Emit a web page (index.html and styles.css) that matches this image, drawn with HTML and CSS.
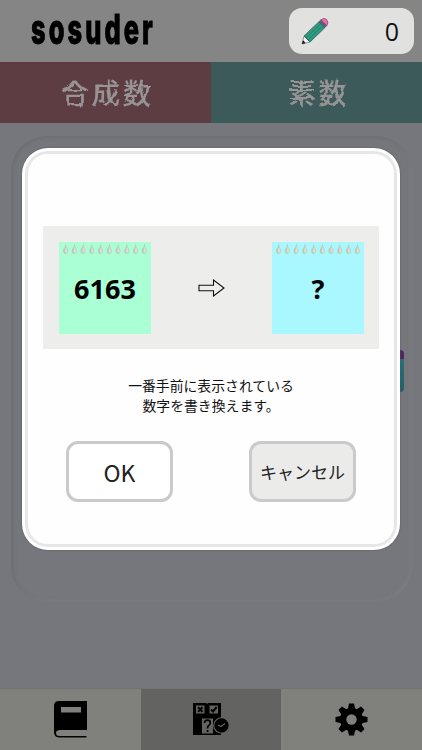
FILE: index.html
```html
<!DOCTYPE html>
<html lang="ja">
<head>
    <meta charset="UTF-8">
    <meta name="viewport" content="width=device-width, initial-scale=1.0">
    <title>sosuder</title>
    <link rel="stylesheet" href="styles.css">
</head>
<body>
    <!-- rough chalk edge for the tab labels -->
    <svg class="defs" width="0" height="0">
        <filter id="chalk">
            <feTurbulence type="fractalNoise" baseFrequency=".1" numOctaves="1" seed="4"/>
            <feDisplacementMap in="SourceGraphic" scale="4" xChannelSelector="R" yChannelSelector="G"/>
        </filter>
    </svg>
    <div class="app">
        <header class="header">
            <h1 class="logo">sosuder</h1>
            <div class="counter">
                <svg class="pencil" width="28" height="28" viewBox="0 0 28 28">
                    <path d="M1 27L3 19L9 25Z" fill="#f4f4f2" stroke="#555" stroke-width=".6"/>
                    <path d="M1 27L2 23.2L4.7 25.9Z" fill="#111"/>
                    <path d="M3 19L18 4.7L24 10.5L9 25Z" fill="#2f9c82" stroke="#28584e" stroke-width=".8"/>
                    <path d="M5 21L20 6.6M7 23L22 8.6" stroke="#257663" stroke-width=".8"/>
                    <path d="M18 4.7L20 2.8L25.8 8.6L24 10.5Z" fill="#5b5d91" stroke="#454763" stroke-width=".6"/>
                    <path d="M20 2.8Q23 .2 25.6 2.5Q28.2 5.4 25.8 8.6Z" fill="#ee7199" stroke="#74485a" stroke-width=".7"/>
                </svg>
                <span>0</span>
            </div>
        </header>

        <nav class="tabs">
            <div class="tab composite"><span>合成数</span></div>
            <div class="tab prime"><span>素数</span></div>
        </nav>

        <main class="board">
            <div class="panel"></div>
            <div class="hidden-card"></div>
        </main>

        <footer class="footer">
            <div class="menu">
                <svg width="33" height="37" viewBox="0 0 33 37">
                    <path fill="#000" fill-rule="evenodd" d="M5 0H33V29H5.5Q2 29.500 2 32Q2 35 5.500 35H32.500V36.500H5Q0 36 0 31V5Q0 0 5 0ZM7 6V11.500H27V6Z"/>
                </svg>
            </div>
            <div class="menu active">
                <svg width="36" height="33" viewBox="0 0 36 33">
                    <path d="M0 0H13L14 1L15 0H28V32H0Z" fill="#000"/>
                    <path d="M3 2.500H11.500V10.500H3ZM16.500 2.500H25V10.500H16.500ZM9 15.500H20V30.500H9Z" fill="#636361"/>
                    <path d="M5 4.300L9.500 8.800M9.500 4.300L5 8.800M18 6.500L20 8.500L23.700 4" fill="none" stroke="#000" stroke-width="2"/>
                    <path d="M11.500 20Q11.500 17.200 14.500 17.200Q17.300 17.200 17.300 19.700Q17.300 21.300 15.800 22.400Q14.500 23.300 14.500 25.500M14.500 27V29" fill="none" stroke="#000" stroke-width="1.700"/>
                    <circle cx="28.500" cy="22.500" r="8.300" fill="#636361"/>
                    <circle cx="28.500" cy="22.500" r="6.200" fill="#000"/>
                    <circle cx="28.500" cy="22.500" r="6.500" fill="none" stroke="#000" stroke-width="1.300"/>
                    <path d="M25 22L28 23.500L32 20.500" fill="none" stroke="#636361" stroke-width="1.200"/>
                </svg>
            </div>
            <div class="menu">
                <svg width="33" height="33" viewBox="-16.500 -16.500 33 33">
                    <g fill="#000">
                        <path id="tooth" d="M-3.800 -10L-2.500 -16H2.500L3.800 -10V10L2.500 16H-2.500L-3.800 10Z"/>
                        <use href="#tooth" transform="rotate(45)"/>
                        <use href="#tooth" transform="rotate(90)"/>
                        <use href="#tooth" transform="rotate(135)"/>
                        <circle r="11.500"/>
                    </g>
                    <circle r="5.200" fill="#80807d"/>
                </svg>
            </div>
        </footer>

        <div class="modal">
            <div class="modal-inner">
                <div class="preview">
                    <div class="note green">
                        <svg class="holes" width="92" height="14" viewBox="0 0 92 14">
                            <defs>
                                <g id="hole">
                                    <path d="M.3 0Q.7 4 2.200 6Q3.300 10.500 0 11Q-3.300 10.500 -2.200 6Q-.2 4 .3 0Z" fill="#b9ccb9"/>
                                    <path d="M.6 3.500Q3 9.500 .6 10.200Q-1.800 9.500 .6 3.500Z" fill="#deded6"/>
                                </g>
                            </defs>
                            <use href="#hole" x="6.500" y="1"/><use href="#hole" x="15.200" y="1"/>
                            <use href="#hole" x="24" y="1"/><use href="#hole" x="32.700" y="1"/>
                            <use href="#hole" x="41.500" y="1"/><use href="#hole" x="50.200" y="1"/>
                            <use href="#hole" x="59" y="1"/><use href="#hole" x="67.700" y="1"/>
                            <use href="#hole" x="76.500" y="1"/><use href="#hole" x="85.200" y="1"/>
                        </svg>
                        <span>6163</span>
                    </div>
                    <svg width="27" height="18" viewBox="0 0 27 18">
                        <path d="M1 6.300H15.500V1L26 9L15.500 17V11.700H1Z" fill="none" stroke="#111" stroke-width="1.100"/>
                    </svg>
                    <div class="note blue">
                        <svg class="holes" width="92" height="14" viewBox="0 0 92 14">
                            <use href="#hole" x="6.500" y="1"/><use href="#hole" x="15.200" y="1"/>
                            <use href="#hole" x="24" y="1"/><use href="#hole" x="32.700" y="1"/>
                            <use href="#hole" x="41.500" y="1"/><use href="#hole" x="50.200" y="1"/>
                            <use href="#hole" x="59" y="1"/><use href="#hole" x="67.700" y="1"/>
                            <use href="#hole" x="76.500" y="1"/><use href="#hole" x="85.200" y="1"/>
                        </svg>
                        <span>?</span>
                    </div>
                </div>
                <p class="message">一番手前に表示されている<br>数字を書き換えます。</p>
                <div class="buttons">
                    <button class="ok">OK</button>
                    <button class="cancel">キャンセル</button>
                </div>
            </div>
        </div>
    </div>
</body>
</html>
```
FILE: styles.css
```css
* {
    box-sizing: border-box;
}
body {
    margin: 0;
    font-family: "Noto Sans CJK JP", sans-serif;
    background: #75777c;
}
.defs {
    position: absolute;
}
.app {
    position: relative;
    display: flex;
    flex-direction: column;
    height: 750px;
    overflow: hidden;
}
.header {
    display: flex;
    justify-content: space-between;
    height: 62px;
    padding: 8px 8px 0 31px;
    background: #858585;
}
.logo {
    margin: 0;
    font-family: Inter, sans-serif;
    font-size: 41px;
    font-weight: 800;
    line-height: 43px;
    letter-spacing: 5px;
    transform: scaleX(.62);
    transform-origin: left;
    width: 200px;
    color: #000;
    -webkit-text-stroke: 1px #000;
    stroke-linejoin: round;
}
.counter {
    display: flex;
    flex-shrink: 0;
    align-items: center;
    justify-content: space-between;
    width: 125px;
    height: 46px;
    padding: 0 15px 0 12px;
    border-radius: 13px;
    background: #e1e1df;
    font-family: "Open Sans", sans-serif;
    font-size: 25px;
    color: #111;
}
.tabs {
    display: flex;
    height: 61px;
}
.tab {
    flex: 1;
    padding-left: 4px;
    color: #969494;
    font-size: 28px;
    font-weight: 500;
    line-height: 61px;
    letter-spacing: 3px;
    text-align: center;
}
.tab span {
    display: inline-block;
    filter: url(#chalk);
}
.composite {
    background: #5d3c42;
}
.prime {
    background: #3d5a5b;
}
.board {
    position: relative;
    flex: 1;
    padding: 13px 10px 86px 11px;
}
.panel {
    height: 100%;
    border-radius: 36px;
    box-shadow: inset 2px 2px 4px #6b6e72, inset -2px -2px 3px #7c7d80;
}
.hidden-card {
    position: absolute;
    top: 227px;
    right: 18px;
    width: 20px;
    height: 42px;
    border-radius: 4px;
    background: linear-gradient(#51255e 9px, #27717a 9px, #235f66);
}
.footer {
    display: flex;
    height: 62px;
    border-top: 1px solid #737373;
    background: #80807d;
}
.menu {
    flex: 1;
    display: flex;
    align-items: center;
    justify-content: center;
}
.menu.active {
    background: #636361;
}
.modal {
    position: absolute;
    top: 148px;
    left: 22px;
    width: 378px;
    height: 402px;
    padding: 3px;
    border-radius: 26px;
    background: #fff;
    box-shadow: 0 0 2px #55575c;
}
.modal-inner {
    height: 100%;
    padding: 72px 15px 0;
    border: 3px solid #e7e7e7;
    border-radius: 23px;
    background: #fefefe;
}
.preview {
    display: flex;
    align-items: center;
    justify-content: space-between;
    height: 123px;
    padding: 0 15px 0 16px;
    background: #ededec;
}
.note {
    position: relative;
    width: 92px;
    height: 92px;
    font-family: "Noto Sans", sans-serif;
    font-size: 27px;
    font-weight: 700;
    line-height: 93px;
    text-align: center;
    color: #000;
}
.green {
    background: #aaffd5;
}
.blue {
    background: #aaf8ff;
}
.holes {
    position: absolute;
    top: 0;
    left: 0;
}
.message {
    margin: 26px 0 26px;
    font-size: 13.85px;
    line-height: 20px;
    text-align: center;
    color: #111;
}
.buttons {
    display: flex;
    justify-content: space-between;
    padding: 0 23px;
}
button {
    width: 107px;
    height: 61px;
    padding: 0;
    border: 3px solid #cacaca;
    border-radius: 12px;
    font-family: "Noto Sans CJK JP", sans-serif;
    color: #222;
}
.ok {
    background: #fff;
    font-size: 23px;
}
.cancel {
    background: #ebebea;
    font-size: 17px;
}
```
